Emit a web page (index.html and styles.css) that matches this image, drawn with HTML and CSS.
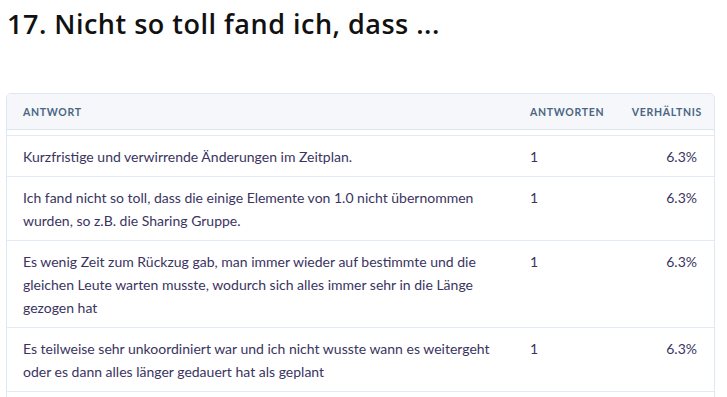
FILE: index.html
```html
<!DOCTYPE html>
<html lang="de">
<head>
<meta charset="utf-8">
<link rel="stylesheet" href="styles.css">
</head>
<body>
<h2 class="title">17. Nicht so toll fand ich, dass ...</h2>
<div class="card">
  <table class="answers">
    <colgroup>
      <col class="w-text">
      <col class="w-count">
      <col class="w-ratio">
    </colgroup>
    <thead>
      <tr>
        <th class="col-text">ANTWORT</th>
        <th class="col-count">ANTWORTEN</th>
        <th class="col-ratio">VERHÄLTNIS</th>
      </tr>
    </thead>
    <tbody>
      <tr class="spacer"><td colspan="3"></td></tr>
      <tr>
        <td class="col-text">Kurzfristige und verwirrende Änderungen im Zeitplan.</td>
        <td class="col-count">1</td>
        <td class="col-ratio">6.3%</td>
      </tr>
      <tr>
        <td class="col-text">Ich fand nicht so toll, dass die einige Elemente von 1.0 nicht übernommen wurden, so z.B. die Sharing Gruppe.</td>
        <td class="col-count">1</td>
        <td class="col-ratio">6.3%</td>
      </tr>
      <tr>
        <td class="col-text">Es wenig Zeit zum Rückzug gab, man immer wieder auf bestimmte und die gleichen Leute warten musste, wodurch sich alles immer sehr in die Länge gezogen hat</td>
        <td class="col-count">1</td>
        <td class="col-ratio">6.3%</td>
      </tr>
      <tr>
        <td class="col-text">Es teilweise sehr unkoordiniert war und ich nicht wusste wann es weitergeht oder es dann alles länger gedauert hat als geplant</td>
        <td class="col-count">1</td>
        <td class="col-ratio">6.3%</td>
      </tr>
      <tr class="empty"><td colspan="3"></td></tr>
    </tbody>
  </table>
</div>
</body>
</html>
```

FILE: styles.css
```css
html, body {
  margin: 0;
  padding: 0;
  background: #ffffff;
}

body {
  padding: 0 12px 0 6px;
  font-family: "Lato", "Open Sans", sans-serif;
}

.title {
  margin: 0;
  padding: 6px 0 0 1px;
  height: 93px;
  box-sizing: border-box;
  font-family: "Open Sans", sans-serif;
  font-weight: 600;
  font-size: 27px;
  line-height: 36px;
  color: #111111;
  letter-spacing: 0.5px;
}

.card {
  border: 1px solid #dde8f4;
  border-radius: 5px;
  overflow: hidden;
  width: 709px;
  box-sizing: border-box;
}

.answers {
  width: 100%;
  border-collapse: collapse;
  table-layout: fixed;
}

.w-text { width: 507px; }
.w-count { width: 100px; }

.answers th {
  background: #f5f7fa;
  color: #4b6583;
  font-size: 10.5px;
  font-weight: 700;
  letter-spacing: 0.7px;
  text-align: left;
  height: 35px;
  padding: 0;
  border-bottom: 1px solid #dbe5f0;
  white-space: nowrap;
}

.answers td {
  color: #3a345f;
  font-size: 14px;
  line-height: 23px;
  padding: 9px 0 8px 0;
  vertical-align: top;
  border-bottom: 1px solid #e1eaf6;
}

.spacer td {
  height: 5px;
  padding: 0;
  line-height: 0;
}

.col-text {
  padding-left: 16px !important;
  padding-right: 18px !important;
}

.col-count {
  padding-left: 16px !important;
}

.col-ratio {
  text-align: right !important;
  padding-right: 17px !important;
}

.answers th.col-ratio {
  padding-right: 12px !important;
}

.answers .empty td {
  border-bottom: none;
  height: 12px;
  padding: 0;
}
```
